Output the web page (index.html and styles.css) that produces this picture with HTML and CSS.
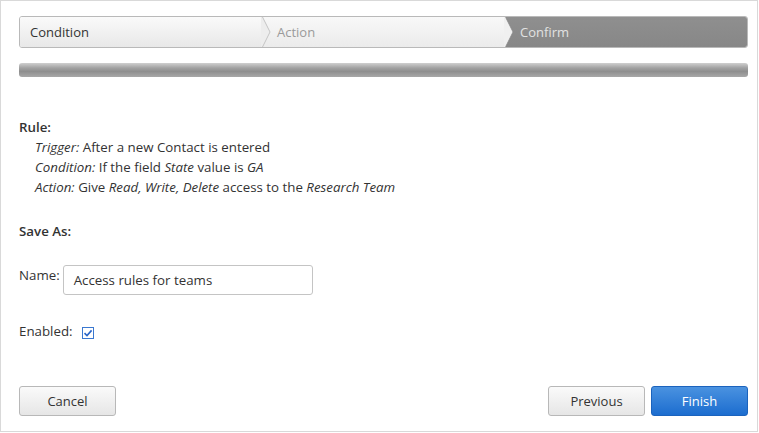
FILE: index.html
```html
<!DOCTYPE html>
<html>
<head>
<meta charset="utf-8">
<link rel="stylesheet" href="styles.css">
</head>
<body>
<div class="frame">
  <div class="steps">
    <div class="step step-done">
      <span>Condition</span>
      <svg class="chev" width="10" height="32" viewBox="0 0 10 32"><path d="M0 0 L1 0 L9 16 L1 32 L0 32 Z" fill="#ededed"/><path d="M1 0 L9 16 L1 32" fill="none" stroke="#c4c4c4" stroke-width="1"/></svg>
    </div>
    <div class="step step-next">
      <span>Action</span>
      <svg class="chev" width="10" height="32" viewBox="0 0 10 32"><path d="M0 0 L1 0 L9 16 L1 32 L0 32 Z" fill="#f0f0f0"/><path d="M1 0 L9 16 L1 32" fill="none" stroke="#8a8a8a" stroke-width="0.8"/></svg>
    </div>
    <div class="step step-current">
      <span>Confirm</span>
    </div>
  </div>
  <div class="progress"></div>

  <div class="rule">
    <div class="heading">Rule:</div>
    <div class="line"><em>Trigger:</em> After a new Contact is entered</div>
    <div class="line"><em>Condition:</em> If the field <em>State</em> value is <em>GA</em></div>
    <div class="line"><em>Action:</em> Give <em>Read, Write, Delete</em> access to the <em>Research Team</em></div>
  </div>

  <div class="heading save">Save As:</div>

  <div class="field name-row">
    <label class="lbl">Name:</label>
    <div class="input">Access rules for teams</div>
  </div>

  <div class="field enabled-row">
    <label class="lbl">Enabled:</label>
    <span class="check"><svg width="10" height="10" viewBox="0 0 10 10"><path d="M1.5 5.2 L4 7.6 L8.6 2.4" fill="none" stroke="#2a66c8" stroke-width="1.6"/></svg></span>
  </div>

  <div class="buttons">
    <button class="btn">Cancel</button>
    <div class="right">
      <button class="btn">Previous</button>
      <button class="btn primary">Finish</button>
    </div>
  </div>
</div>
</body>
</html>
```
FILE: styles.css
```css
html, body { margin: 0; padding: 0; background: #fff; }
body {
  font-family: "Open Sans", "Noto Sans", sans-serif;
  font-size: 13.3px;
  color: #333;
}
.frame {
  width: 729px;
  height: 415px;
  border: 1px solid #d9d9d9;
  padding: 15px 9px 0 18px;
  position: relative;
}
.steps {
  display: flex;
  height: 30px;
  border: 1px solid #b9b9b9;
  border-radius: 3px;
  overflow: hidden;
  font-size: 13px;
}
.step {
  position: relative;
  flex: 0 0 243px;
  display: flex;
  align-items: center;
  box-sizing: border-box;
}
.step span { position: relative; z-index: 2; }
.step-done {
  background: linear-gradient(#fafafa, #e8e8e8);
  padding-left: 10px;
  color: #333;
}
.step-next {
  background: linear-gradient(#f8f8f8, #ebebeb);
  padding-left: 14px;
  color: #9a9a9a;
}
.step-current {
  flex: 1 1 auto;
  background: linear-gradient(#8f8f8f, #878787);
  padding-left: 14px;
  color: #e2e2e2;
}
.chev {
  position: absolute;
  right: -8px;
  top: -1px;
  z-index: 3;
}
.progress {
  margin-top: 15px;
  height: 14px;
  border-radius: 3px;
  background: linear-gradient(#d0d0d0 0%, #a2a2a2 35%, #8e8e8e 60%, #a8a8a8 100%);
}
.rule { margin-top: 40px; }
.heading { font-weight: 600; line-height: 20px; }
.line { padding-left: 16px; line-height: 20px; }
em { font-style: italic; }
.save { margin-top: 24px; }
.field { display: flex; align-items: flex-start; }
.name-row { margin-top: 24px; line-height: 20px; }
.name-row .lbl { margin-right: 3px; }
.input {
  width: 238px;
  height: 28px;
  border: 1px solid #c4c4c4;
  border-radius: 3px;
  padding-left: 10px;
  line-height: 28px;
}
.enabled-row { margin-top: 26px; align-items: center; line-height: 20px; }
.enabled-row .lbl { margin-right: 9px; }
.check {
  width: 10px; height: 10px;
  border: 1px solid #3a78d0;
  display: inline-flex; align-items: center; justify-content: center;
  margin-top: 4px;
}
.buttons {
  margin-top: 45px;
  display: flex;
  justify-content: space-between;
}
.right { display: flex; gap: 6px; }
.btn {
  width: 97px;
  height: 30px;
  border: 1px solid #b8b8b8;
  border-radius: 3px;
  background: linear-gradient(#fafafa, #e6e6e6);
  font-family: "Open Sans", "Noto Sans", sans-serif;
  font-size: 13px;
  color: #333;
  padding: 0;
}
.btn.primary {
  background: linear-gradient(#4a92e0, #1c6dcf);
  border-color: #1b63bd;
  color: #fff;
}
```
